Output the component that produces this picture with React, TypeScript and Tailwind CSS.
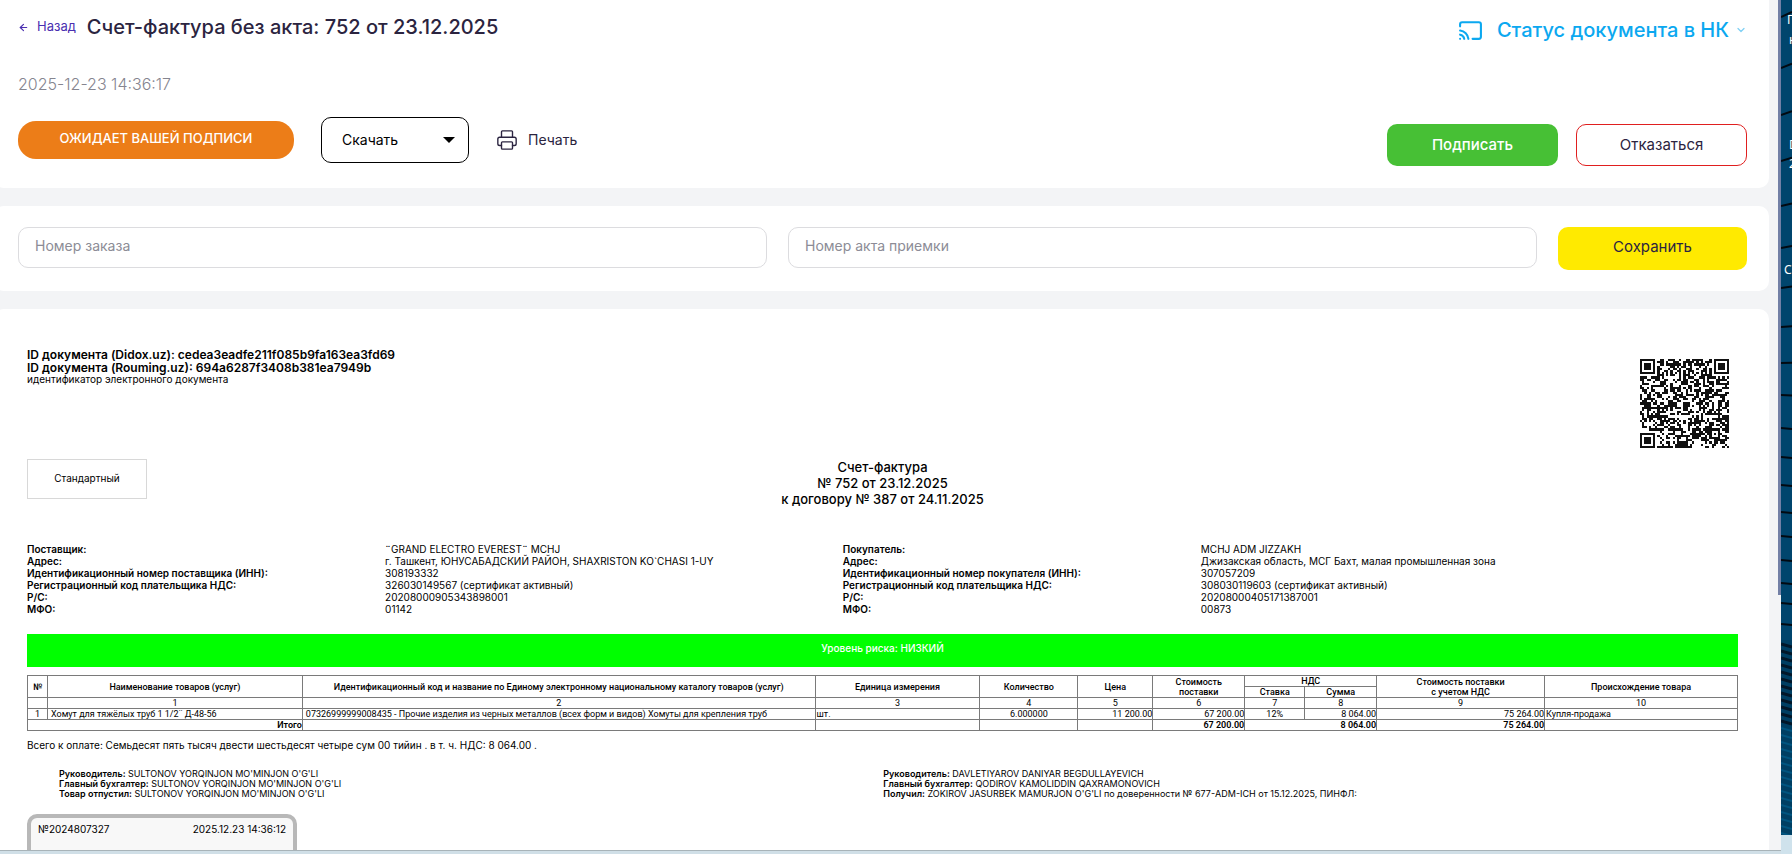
import type { ReactNode } from 'react'
import { ArrowLeft, Cast, ChevronDown, Printer } from 'lucide-react'

type Row = [label: string, value: string]

const supplier: Row[] = [
  ['Поставщик:', '¨GRAND ELECTRO EVEREST¨ MCHJ'],
  ['Адрес:', 'г. Ташкент, ЮНУСАБАДСКИЙ РАЙОН, SHAXRISTON KO`CHASI 1-UY'],
  ['Идентификационный номер поставщика (ИНН):', '308193332'],
  ['Регистрационный код плательщика НДС:', '326030149567 (сертификат активный)'],
  ['Р/С:', '20208000905343898001'],
  ['МФО:', '01142'],
]

const buyer: Row[] = [
  ['Покупатель:', 'MCHJ ADM JIZZAKH'],
  ['Адрес:', 'Джизакская область, МСГ Бахт, малая промышленная зона'],
  ['Идентификационный номер покупателя (ИНН):', '307057209'],
  ['Регистрационный код плательщика НДС:', '308030119603 (сертификат активный)'],
  ['Р/С:', '20208000405171387001'],
  ['МФО:', '00873'],
]

const supplierSigns: Row[] = [
  ['Руководитель:', "SULTONOV YORQINJON MO'MINJON O'G'LI"],
  ['Главный бухгалтер:', "SULTONOV YORQINJON MO'MINJON O'G'LI"],
  ['Товар отпустил:', "SULTONOV YORQINJON MO'MINJON O'G'LI"],
]

const buyerSigns: Row[] = [
  ['Руководитель:', 'DAVLETIYAROV DANIYAR BEGDULLAYEVICH'],
  ['Главный бухгалтер:', 'QODIROV KAMOLIDDIN QAXRAMONOVICH'],
  ['Получил:', "ZOKIROV JASURBEK MAMURJON O'G'LI по доверенности № 677-ADM-ICH от 15.12.2025, ПИНФЛ:"],
]

// relative column widths of the goods table
const columns = [20, 255, 513, 165, 98, 75, 92, 60, 72, 168, 193]
const columnsTotal = columns.reduce((a, b) => a + b, 0)

const QR_SIZE = 41

function qrPath() {
  let seed = 752
  const random = () => {
    seed = (seed * 1103515245 + 12345) % 2147483648
    return seed / 2147483648
  }
  const ring = (x: number, y: number, cx: number, cy: number) => Math.max(Math.abs(x - cx), Math.abs(y - cy))
  const finders = [[3, 3], [QR_SIZE - 4, 3], [3, QR_SIZE - 4]]
  let d = ''
  for (let y = 0; y < QR_SIZE; y++) {
    for (let x = 0; x < QR_SIZE; x++) {
      let dark = random() < 0.5
      if (y === 6 || x === 6) dark = (x + y) % 2 === 0
      const align = ring(x, y, 34, 34)
      if (align <= 2) dark = align !== 1
      for (const [cx, cy] of finders) {
        const r = ring(x, y, cx, cy)
        if (r <= 4) dark = r !== 2 && r !== 4
      }
      if (dark) d += `M${x} ${y}h1v1h-1z`
    }
  }
  return d
}

function QrCode() {
  return (
    <svg viewBox={`0 0 ${QR_SIZE} ${QR_SIZE}`} className="size-[89px]" role="img" aria-label="QR" shapeRendering="crispEdges">
      <path d={qrPath()} fill="#111" />
    </svg>
  )
}

function Card({ children, className }: { children: ReactNode; className: string }) {
  return <section className={`-ml-1.5 bg-white pl-6 pr-[22px] ${className}`}>{children}</section>
}

function Party({ rows }: { rows: Row[] }) {
  return (
    <dl className="col-span-2 grid grid-cols-subgrid">
      {rows.map(([label, value]) => (
        <div key={label} className="contents">
          <dt className="font-semibold whitespace-nowrap">{label}</dt>
          <dd className="whitespace-nowrap">{value}</dd>
        </div>
      ))}
    </dl>
  )
}

function Signs({ rows }: { rows: Row[] }) {
  return (
    <div className="text-[9px] leading-[10px]">
      {rows.map(([label, value]) => (
        <p key={label} className="whitespace-nowrap">
          <b className="font-semibold">{label}</b> {value}
        </p>
      ))}
    </div>
  )
}

function GoodsTable() {
  const head = 'border border-[#7a7a7a] p-0 text-center font-medium'
  const cell = 'border border-[#7a7a7a] p-0'
  return (
    <table className="mt-2 w-full table-fixed border-collapse font-[Roboto,sans-serif] text-[9px] leading-[10px]">
      <colgroup>
        {columns.map((width, i) => (
          <col key={i} style={{ width: `${(width / columnsTotal) * 100}%` }} />
        ))}
      </colgroup>
      <thead>
        <tr>
          <th rowSpan={2} className={head}>№</th>
          <th rowSpan={2} className={head}>Наименование товаров (услуг)</th>
          <th rowSpan={2} className={head}>
            Идентификационный код и название по Единому электронному национальному каталогу товаров (услуг)
          </th>
          <th rowSpan={2} className={head}>Единица измерения</th>
          <th rowSpan={2} className={head}>Количество</th>
          <th rowSpan={2} className={head}>Цена</th>
          <th rowSpan={2} className={head}>Стоимость<br />поставки</th>
          <th colSpan={2} className={head}>НДС</th>
          <th rowSpan={2} className={head}>Стоимость поставки<br />с учетом НДС</th>
          <th rowSpan={2} className={head}>Происхождение товара</th>
        </tr>
        <tr>
          <th className={head}>Ставка</th>
          <th className={head}>Сумма</th>
        </tr>
      </thead>
      <tbody>
        <tr className="text-center">
          <td className={cell} />
          {[1, 2, 3, 4, 5, 6, 7, 8, 9, 10].map((n) => (
            <td key={n} className={cell}>{n}</td>
          ))}
        </tr>
        <tr>
          <td className={`${cell} text-center`}>1</td>
          <td className={`${cell} pl-[3px]`}>Хомут для тяжёлых труб 1 1/2¨ Д-48-56</td>
          <td className={`${cell} pl-[3px]`}>
            07326999999008435 - Прочие изделия из черных металлов (всех форм и видов) Хомуты для крепления труб
          </td>
          <td className={`${cell} pl-px`}>шт.</td>
          <td className={`${cell} text-center`}>6.000000</td>
          <td className={`${cell} text-right`}>11 200.00</td>
          <td className={`${cell} text-right`}>67 200.00</td>
          <td className={`${cell} text-center`}>12%</td>
          <td className={`${cell} text-right`}>8 064.00</td>
          <td className={`${cell} text-right`}>75 264.00</td>
          <td className={`${cell} pl-px`}>Купля-продажа</td>
        </tr>
        <tr className="text-right font-semibold">
          <td colSpan={2} className={cell}>Итого</td>
          <td className={cell} />
          <td className={cell} />
          <td className={cell} />
          <td className={cell} />
          <td className={cell}>67 200.00</td>
          <td colSpan={2} className={cell}>8 064.00</td>
          <td className={cell}>75 264.00</td>
          <td className={cell} />
        </tr>
      </tbody>
    </table>
  )
}

const beams = [17, 68, 115, 161, 206, 248, 288, 327, 363, 395, 428, 457, 485, 512, 536, 560, 583, 603, 624]
const waves = Array.from({ length: 28 }, (_, i) => 644 + i * 7)

function Desktop() {
  return (
    <aside className="relative flex w-[11px] flex-col overflow-hidden bg-[#cfe2ec] font-['Noto_Sans',sans-serif] text-xs leading-4 text-white">
      <svg viewBox="0 0 11 835" preserveAspectRatio="none" className="min-h-0 flex-1">
        <rect width="11" height="835" fill="#00456d" />
        <rect y="640" width="11" height="195" fill="#003f63" />
        {beams.map((y, i) => (
          <path key={y} d={`M0 ${y} L11 ${y - Math.max(5 - i * 0.6, -1)}`} stroke="#020a12" strokeWidth="2" />
        ))}
        {waves.map((y, i) => (
          <path key={y} d={`M0 ${y} L11 ${y + 3}`} stroke={i < 12 ? '#03182a' : '#005580'} strokeWidth={i < 12 ? 3 : 2} />
        ))}
      </svg>
      <div className="h-[19px]" />
      <span className="absolute left-1.5 top-3">П</span>
      <span className="absolute left-2 top-8">к</span>
      <span className="absolute left-2 top-[137px]">D</span>
      <span className="absolute left-2 top-[156px]">2</span>
      <span className="absolute left-[3px] top-[262px]">С</span>
    </aside>
  )
}

export default function App() {
  return (
    <div className="flex h-screen overflow-hidden font-[Inter,sans-serif] text-black">
      <div className="flex min-w-0 flex-1 flex-col">
        <div className="flex min-h-0 flex-1 bg-[#f3f4f6]">
          <main className="mr-[9px] flex min-w-0 flex-1 flex-col gap-[18px]">
            <Card className="rounded-b-[10px] pb-[22px] pt-3">
              <header className="flex items-start justify-between">
                <div className="flex items-center gap-[11px]">
                  <a href="#" className="flex items-center gap-2 text-[13px] text-[#4a2fb0]">
                    <ArrowLeft size={11} strokeWidth={2.5} />
                    Назад
                  </a>
                  <h1 className="text-xl leading-[30px] font-medium text-[#2b2440]">Счет-фактура без акта: 752 от 23.12.2025</h1>
                </div>
                <button className="flex items-center text-xl leading-9 font-medium text-[#0ba8f0]">
                  <Cast size={25} strokeWidth={2} className="mr-3.5" />
                  Статус документа в НК
                  <ChevronDown size={12} strokeWidth={2.5} className="ml-1.5 text-[#7fd0f5]" />
                </button>
              </header>

              <p className="mt-6 text-base font-light text-[#85858f]">2025-12-23 14:36:17</p>

              <div className="mt-[18px] flex items-center">
                <div className="flex h-[38px] w-[276px] items-center justify-center rounded-[18px] bg-[#ec7d18] pb-0.5 text-[13px] font-medium text-white">
                  ОЖИДАЕТ ВАШЕЙ ПОДПИСИ
                </div>
                <button className="ml-[27px] flex h-[46px] w-[148px] items-center justify-between rounded-[10px] border border-black pl-5 pr-[13px] text-sm">
                  Скачать
                  <svg viewBox="0 0 12 6" className="h-1.5 w-3" aria-hidden="true">
                    <path d="M0 0h12L6 6z" />
                  </svg>
                </button>
                <button className="ml-[27px] flex items-center gap-2.5 text-sm text-[#2b2440]">
                  <Printer size={22} strokeWidth={1.5} />
                  Печать
                </button>
                <div className="ml-auto flex gap-[18px] pt-2.5 text-[15px]">
                  <button className="h-[42px] w-[171px] rounded-[10px] bg-[#47c035] font-medium text-white">Подписать</button>
                  <button className="h-[42px] w-[171px] rounded-[10px] border border-[#e01f1f] text-[#2b2440]">Отказаться</button>
                </div>
              </div>
            </Card>

            <Card className="flex items-start gap-[21px] rounded-[10px] pb-[21px] pt-[21px]">
              <input
                aria-label="Номер заказа"
                placeholder="Номер заказа"
                className="h-[41px] min-w-0 flex-1 rounded-[10px] border border-[#dcdcdf] px-4 pb-1 text-sm placeholder:text-[#8c8c96]"
              />
              <input
                aria-label="Номер акта приемки"
                placeholder="Номер акта приемки"
                className="h-[41px] min-w-0 flex-1 rounded-[10px] border border-[#dcdcdf] px-4 pb-1 text-sm placeholder:text-[#8c8c96]"
              />
              <button className="h-[43px] w-[189px] rounded-[10px] bg-[#ffea00] pb-0.5 text-[15px] text-[#2b2440]">Сохранить</button>
            </Card>

            <Card className="min-h-0 flex-1 overflow-hidden rounded-t-[10px] pt-[39px]">
              <div className="px-[9px]">
                <div className="flex items-start justify-between">
                  <div className="text-xs leading-[13px] font-semibold">
                    <p>ID документа (Didox.uz): cedea3eadfe211f085b9fa163ea3fd69</p>
                    <p>ID документа (Rouming.uz): 694a6287f3408b381ea7949b</p>
                    <p className="text-[10px] leading-[10px] font-normal">идентификатор электронного документа</p>
                  </div>
                  <div className="mr-[9px] mt-[11px]">
                    <QrCode />
                  </div>
                </div>

                <div className="mt-[11px] grid grid-cols-3 items-start">
                  <div className="flex h-10 w-[120px] items-center justify-center border border-[#d8d8d8] pb-0.5 text-[10px]">Стандартный</div>
                  <h2 className="text-center text-[13px] leading-4 font-medium">
                    Счет-фактура
                    <br />№ 752 от 23.12.2025
                    <br />к договору № 387 от 24.11.2025
                  </h2>
                </div>

                <div className="mt-9 grid grid-cols-[36fr_46fr_36fr_54fr] text-[10px] leading-3">
                  <Party rows={supplier} />
                  <Party rows={buyer} />
                </div>

                <div className="mt-[19px] flex h-[33px] items-center justify-center bg-[#00ff00] pb-1 text-[10px] font-medium text-white">
                  Уровень риска: НИЗКИЙ
                </div>

                <GoodsTable />

                <p className="mt-[7px] text-[10px] leading-[14px]">
                  Всего к оплате: Семьдесят пять тысяч двести шестьдесят четыре сум 00 тийин . в т. ч. НДС: 8 064.00 .
                </p>

                <div className="mt-[17px] grid grid-cols-[27fr_28fr] pl-8">
                  <Signs rows={supplierSigns} />
                  <Signs rows={buyerSigns} />
                </div>

                <div className="mt-[15px] flex h-[120px] w-[270px] justify-between rounded-[10px] border-4 border-[#b8b8b8] bg-[#f8f8f8] px-[7px] py-1 text-[10px] leading-[14px]">
                  <span>№2024807327</span>
                  <span>2025.12.23 14:36:12</span>
                </div>
              </div>
            </Card>
          </main>
          <div className="h-[70%] w-[3px] bg-[#7380a6]" />
        </div>
        <div className="h-1 border-t border-[#a8b3b8] bg-[#d0dfe7]" />
      </div>
      <Desktop />
    </div>
  )
}
